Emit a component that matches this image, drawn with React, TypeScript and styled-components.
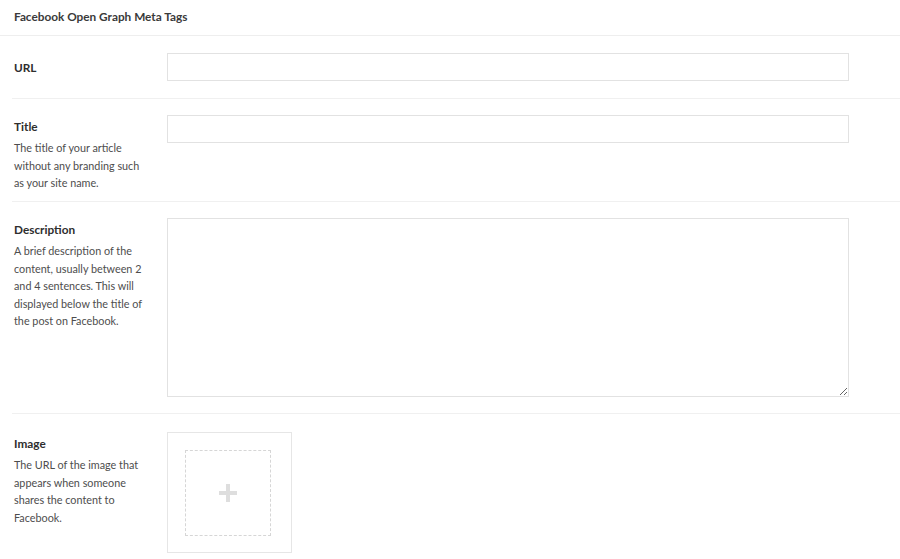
import React from "react";
import styled, { createGlobalStyle } from "styled-components";

const Global = createGlobalStyle`
  html, body { margin: 0; padding: 0; background: #ffffff; }
  body { font-family: Lato, "Open Sans", Arial, sans-serif; color: #333; }
  * { box-sizing: border-box; }
`;

const Page = styled.div`
  width: 900px;
  height: 559px;
  overflow: hidden;
  background: #fff;
`;

const Header = styled.div`
  height: 36px;
  display: flex;
  align-items: center;
  padding: 0 14px 2px;
  border-bottom: 1px solid #eeeeee;
  font-size: 11.8px;
  font-weight: 700;
  color: #3a3a3a;
`;

const Row = styled.div<{ $pt: number; $h: number }>`
  display: flex;
  margin-left: 12px;
  padding: ${(p) => p.$pt}px 51px 0 2px;
  height: ${(p) => p.$h}px;
  border-bottom: 1px solid #f0f0f0;
  &:last-child { border-bottom: none; }
`;

const LabelCol = styled.div<{ $center?: boolean }>`
  width: 153px;
  flex: none;
  padding-top: ${(p) => (p.$center ? "6px" : "3px")};
`;

const Label = styled.div`
  font-size: 11.8px;
  font-weight: 700;
  line-height: 17px;
  color: #2e2e2e;
`;

const Help = styled.div`
  margin-top: 4px;
  max-width: 136px;
  font-size: 10.8px;
  line-height: 17.6px;
  color: #4d4d4d;
`;

const Field = styled.div`
  flex: 1;
`;

const Input = styled.input`
  display: block;
  width: 100%;
  height: 28px;
  border: 1px solid #e2e2e2;
  background: #fff;
  outline: none;
  padding: 0 8px;
  font-family: inherit;
`;

const TextArea = styled.textarea`
  display: block;
  width: 100%;
  height: 179px;
  border: 1px solid #e2e2e2;
  background: #fff;
  outline: none;
  padding: 6px 8px;
  font-family: inherit;
  resize: vertical;
`;

const ImageBox = styled.div`
  width: 125px;
  height: 121px;
  border: 1px solid #e6e6e6;
  display: flex;
  align-items: center;
  padding-left: 17px;
`;

const DropZone = styled.div`
  width: 86px;
  height: 86px;
  border: 1px dashed #d6d6d6;
  display: flex;
  align-items: center;
  justify-content: center;
`;

const Plus = styled.svg`
  width: 20px;
  height: 20px;
  display: block;
`;

export default function App() {
  return (
    <Page>
      <Global />
      <Header>Facebook Open Graph Meta Tags</Header>

      <Row $pt={17} $h={63}>
        <LabelCol $center>
          <Label>URL</Label>
        </LabelCol>
        <Field>
          <Input type="text" />
        </Field>
      </Row>

      <Row $pt={16} $h={103}>
        <LabelCol>
          <Label>Title</Label>
          <Help>The title of your article without any branding such as your site name.</Help>
        </LabelCol>
        <Field>
          <Input type="text" />
        </Field>
      </Row>

      <Row $pt={16} $h={212}>
        <LabelCol>
          <Label>Description</Label>
          <Help>
            A brief description of the content, usually between 2 and 4 sentences. This will displayed below the
            title of the post on Facebook.
          </Help>
        </LabelCol>
        <Field>
          <TextArea />
        </Field>
      </Row>

      <Row $pt={18} $h={145}>
        <LabelCol>
          <Label>Image</Label>
          <Help>The URL of the image that appears when someone shares the content to Facebook.</Help>
        </LabelCol>
        <Field>
          <ImageBox>
            <DropZone>
              <Plus viewBox="0 0 20 20">
                <rect x="8" y="1" width="4" height="18" fill="#dedede" />
                <rect x="1" y="8" width="18" height="4" fill="#dedede" />
              </Plus>
            </DropZone>
          </ImageBox>
        </Field>
      </Row>
    </Page>
  );
}
